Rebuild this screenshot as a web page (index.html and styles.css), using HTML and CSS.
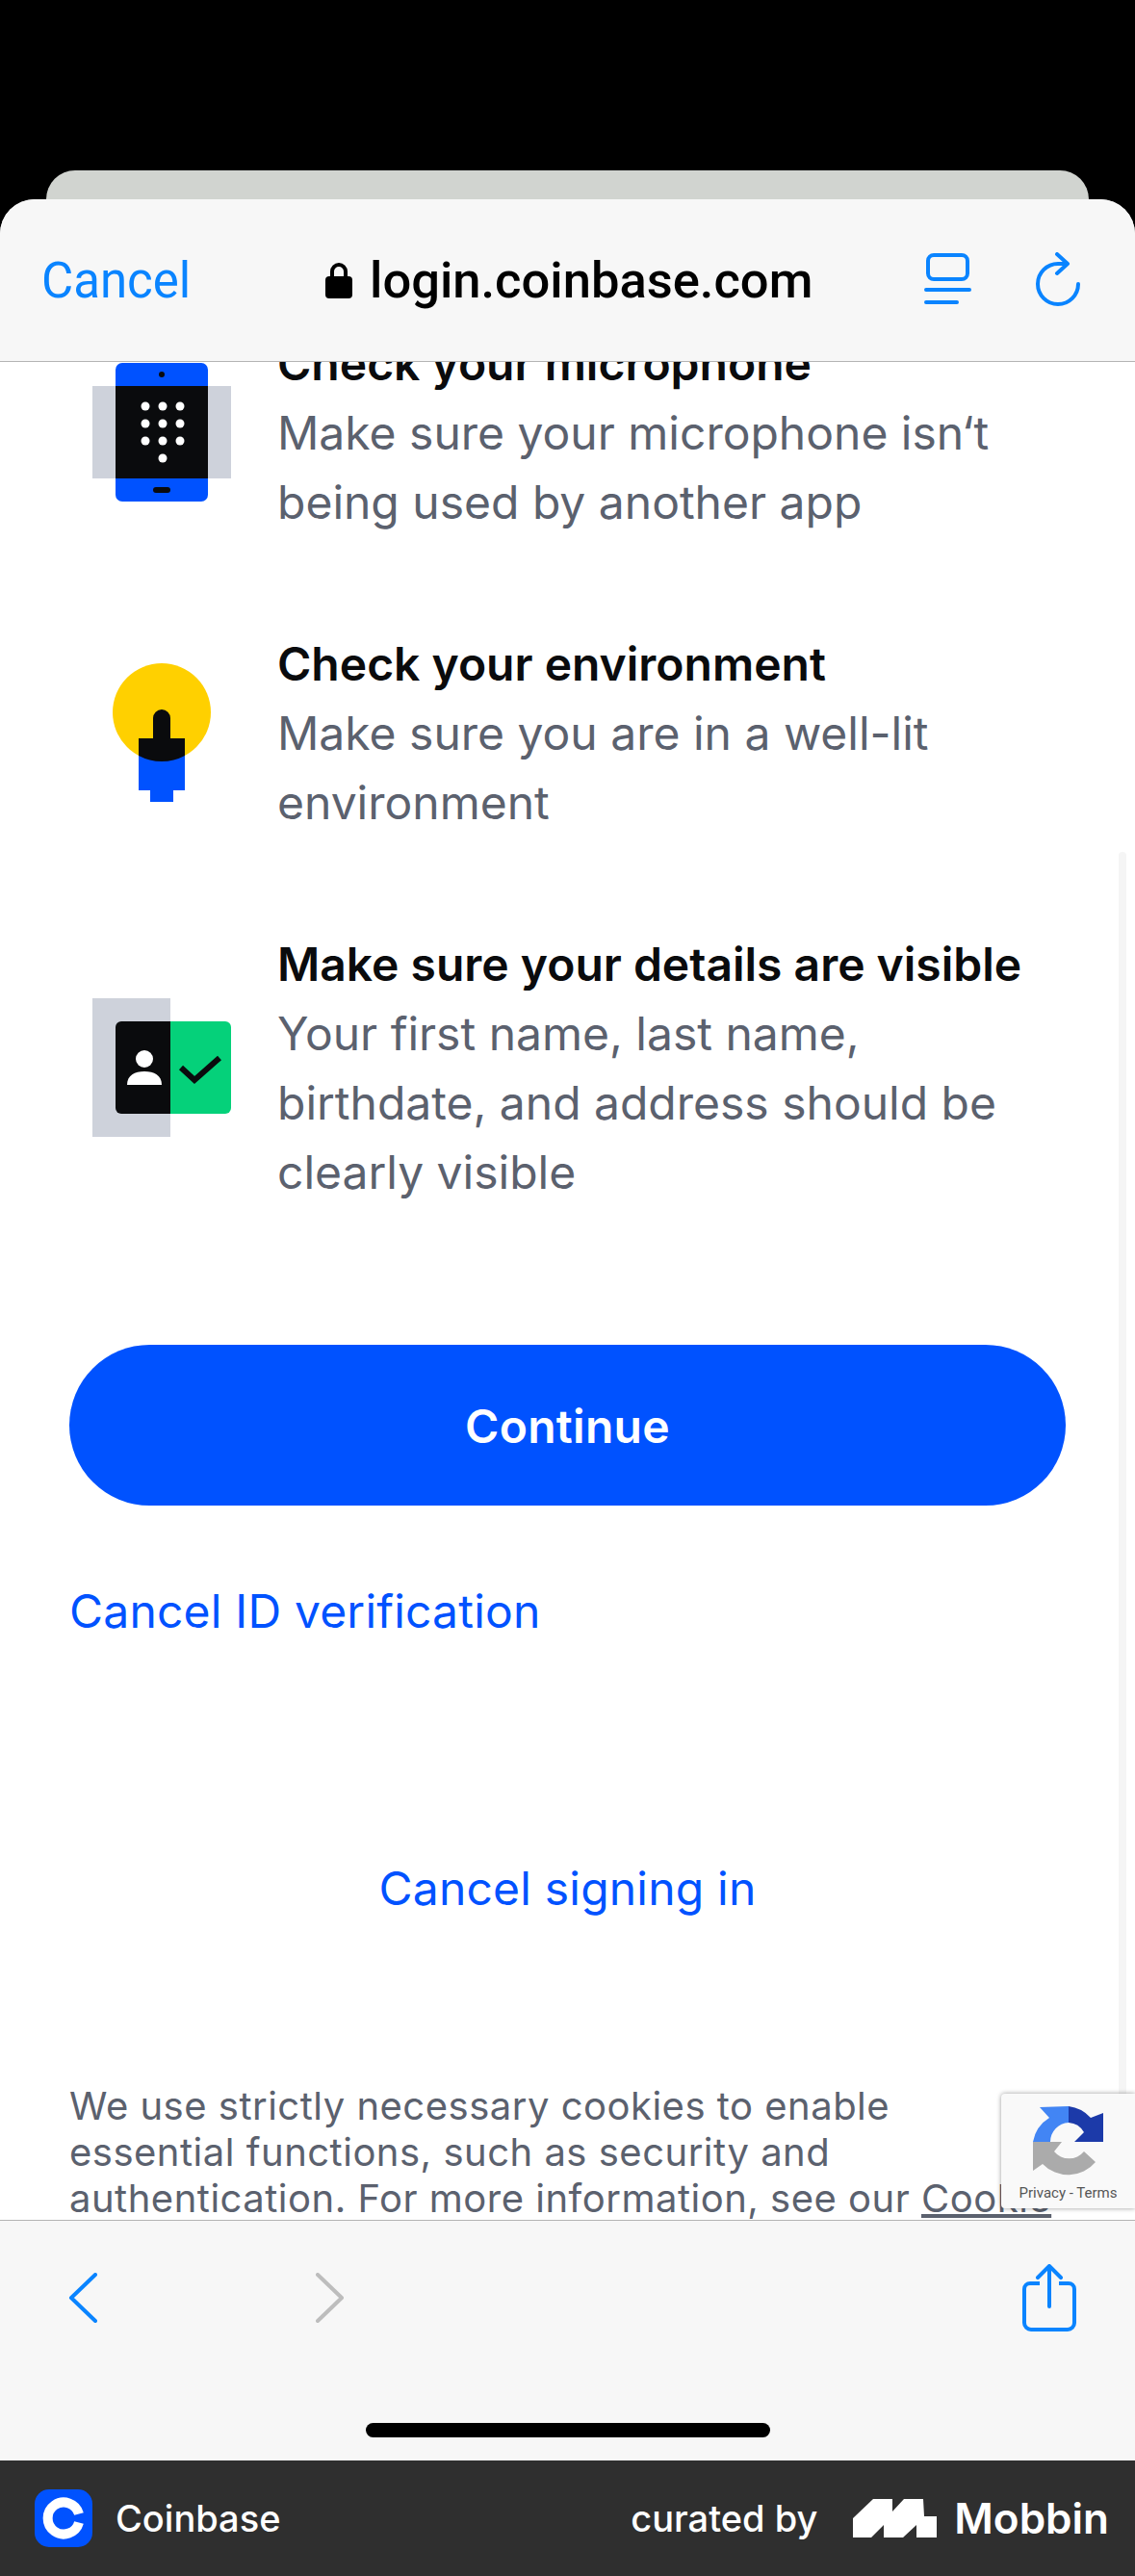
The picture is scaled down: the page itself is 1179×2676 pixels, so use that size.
FILE: index.html
```html
<!DOCTYPE html>
<html lang="en">
<head>
    <meta charset="UTF-8">
    <meta name="viewport" content="width=device-width, initial-scale=1.0">
    <title>Coinbase ID verification</title>
    <link rel="stylesheet" href="styles.css">
</head>
<body>
    <div class="back-card"></div>
    <div class="sheet">
        <header class="browser-bar">
            <span class="bar-cancel">Cancel</span>
            <div class="bar-url">
                <svg class="lock" width="28" height="38" viewBox="0 0 28 38">
                    <path d="M7 17V10a7 7 0 0 1 14 0v7" fill="none" stroke="#000" stroke-width="4"/>
                    <rect x="0" y="15" width="28" height="23" rx="4" fill="#000"/>
                </svg>
                <span>login.coinbase.com</span>
            </div>
            <svg class="bar-tabs" width="49" height="56" viewBox="0 0 49 56">
                <rect x="4" y="2" width="41" height="25" rx="6" fill="none" stroke="#0a84ff" stroke-width="4"/>
                <path d="M2 38H47M2 51H34" fill="none" stroke="#0a84ff" stroke-width="4" stroke-linecap="round"/>
            </svg>
            <svg class="bar-reload" width="50" height="58" viewBox="0 0 50 58">
                <path d="M46 33A21 21 0 1 1 25 12H34" fill="none" stroke="#0a84ff" stroke-width="4" stroke-linecap="round"/>
                <path d="M24 2L35 12L24 22" fill="none" stroke="#0a84ff" stroke-width="4" stroke-linecap="round" stroke-linejoin="round"/>
            </svg>
        </header>

        <main class="content">
            <div class="tip">
                <svg class="tip-icon" width="144" height="144" viewBox="0 0 144 144">
                    <rect x="24" y="0" width="96" height="144" rx="7" fill="#0052ff"/>
                    <rect x="0" y="24" width="144" height="96" fill="#ced2db"/>
                    <rect x="24" y="24" width="96" height="96" fill="#0a0b0d"/>
                    <circle cx="72" cy="12" r="3" fill="#0a0b0d"/>
                    <g fill="#fff">
                        <circle cx="55" cy="45" r="4.5"/><circle cx="73" cy="45" r="4.5"/><circle cx="91" cy="45" r="4.5"/>
                        <circle cx="55" cy="63" r="4.5"/><circle cx="73" cy="63" r="4.5"/><circle cx="91" cy="63" r="4.5"/>
                        <circle cx="55" cy="81" r="4.5"/><circle cx="73" cy="81" r="4.5"/><circle cx="91" cy="81" r="4.5"/>
                        <circle cx="73" cy="99" r="4.5"/>
                    </g>
                    <rect x="63" y="129" width="18" height="6" rx="3" fill="#0a0b0d"/>
                </svg>
                <div class="tip-text">
                    <h2>Check your microphone</h2>
                    <p>Make sure your microphone isn‘t being used by another app</p>
                </div>
            </div>

            <div class="tip">
                <svg class="tip-icon" width="144" height="144" viewBox="0 0 144 144">
                    <circle cx="72" cy="51" r="51" fill="#ffd000"/>
                    <path d="M48 90H96V132H84V144H60V132H48Z" fill="#0052ff"/>
                    <path d="M48 78H63V57a9 9 0 0 1 18 0V78H96V96A51 51 0 0 1 48 96Z" fill="#0a0b0d"/>
                </svg>
                <div class="tip-text">
                    <h2>Check your environment</h2>
                    <p>Make sure you are in a well-lit environment</p>
                </div>
            </div>

            <div class="tip">
                <svg class="tip-icon" width="144" height="144" viewBox="0 0 144 144">
                    <rect x="0" y="0" width="81" height="144" fill="#ced2db"/>
                    <path d="M81 24H138a6 6 0 0 1 6 6V114a6 6 0 0 1-6 6H81Z" fill="#05d17a"/>
                    <path d="M81 24H30a6 6 0 0 0-6 6V114a6 6 0 0 0 6 6H81Z" fill="#0a0b0d"/>
                    <circle cx="54" cy="63" r="9" fill="#fff"/>
                    <path d="M36 90C36 80 44 76 54 76S72 80 72 90Z" fill="#fff"/>
                    <path d="M92 72L106 85L132 62" fill="none" stroke="#0a0b0d" stroke-width="6"/>
                </svg>
                <div class="tip-text">
                    <h2>Make sure your details are visible</h2>
                    <p>Your first name, last name, birthdate, and address should be clearly visible</p>
                </div>
            </div>

            <button class="continue-btn">Continue</button>
            <a class="link cancel-id">Cancel ID verification</a>
            <a class="link cancel-signin">Cancel signing in</a>
            <p class="cookie-text">We use strictly necessary cookies to enable<br>essential functions, such as security and<br>authentication. For more information, see our <u>Cookie</u></p>

            <div class="scroll-thumb"></div>
            <div class="recaptcha">
                <svg width="74" height="75" viewBox="0 0 74 75">
                    <path d="M37 0A37 37 0 0 1 60 12L73 7V37H43L53 27A20 20 0 0 0 37 17Z" fill="#1c3aa9"/>
                    <path d="M37 0L7 1L17 12A37 37 0 0 0 0 37H18A20 20 0 0 1 37 17Z" fill="#4285f4"/>
                    <path d="M0 37H30L22 47A20 20 0 0 0 53 47L65 58A37 37 0 0 1 10 60L0 67Z" fill="#ababab"/>
                </svg>
                <span>Privacy - Terms</span>
            </div>
        </main>

        <footer class="browser-tools">
            <div class="tools-row">
                <svg class="tool-back" width="30" height="52" viewBox="0 0 30 52">
                    <path d="M28 2L3 26L28 50" fill="none" stroke="#0a84ff" stroke-width="4" stroke-linecap="round" stroke-linejoin="round"/>
                </svg>
                <svg class="tool-forward" width="30" height="52" viewBox="0 0 30 52">
                    <path d="M2 2L27 26L2 50" fill="none" stroke="#bdbdbd" stroke-width="4" stroke-linecap="round" stroke-linejoin="round"/>
                </svg>
                <svg class="tool-share" width="56" height="70" viewBox="0 0 56 70">
                    <path d="M18 20H8a6 6 0 0 0-6 6V61a7 7 0 0 0 7 7H47a7 7 0 0 0 7-7V26a6 6 0 0 0-6-6H38" fill="none" stroke="#0a84ff" stroke-width="4"/>
                    <path d="M28 44V2M16 14L28 2L40 14" fill="none" stroke="#0a84ff" stroke-width="4" stroke-linecap="round" stroke-linejoin="round"/>
                </svg>
            </div>
            <div class="home-bar"></div>
        </footer>
    </div>

    <div class="credit">
        <div class="credit-app">
            <svg width="60" height="60" viewBox="0 0 60 60">
                <rect width="60" height="60" rx="15" fill="#0052ff"/>
                <path d="M46 25.500A16.500 16.500 0 1 0 46 34.500" fill="none" stroke="#fff" stroke-width="10"/>
            </svg>
            <span>Coinbase</span>
        </div>
        <div class="credit-by">
            <span>curated by</span>
            <svg width="87" height="40" viewBox="0 0 87 40">
                <path d="M0 20L21 0H41V13L53 0H73L74 18H87V40H66V27L52 40H32V27L19 40H0Z" fill="#fff"/>
            </svg>
            <span class="mobbin">Mobbin</span>
        </div>
    </div>
</body>
</html>
```

FILE: styles.css
```css
* {
    box-sizing: border-box;
}
body {
    font-family: Inter, Arial, sans-serif;
    background: #000;
    margin: 0;
    width: 1179px;
    height: 2676px;
    padding-top: 177px;
    overflow: hidden;
    display: flex;
    flex-direction: column;
}
.back-card {
    height: 30px;
    margin: 0 48px;
    background: #d1d4d0;
    border-radius: 30px 30px 0 0;
    flex-shrink: 0;
}
.sheet {
    flex: 1;
    min-height: 0;
    display: flex;
    flex-direction: column;
    background: #fff;
    border-radius: 36px 36px 0 0;
    overflow: hidden;
}

/* top safari bar */
.browser-bar {
    height: 169px;
    flex-shrink: 0;
    display: flex;
    align-items: center;
    background: #f7f7f7;
    border-bottom: 1px solid #b4b4b4;
    padding: 0 55px 0 43px;
    position: relative;
    z-index: 2;
}
.bar-cancel {
    font-family: Roboto, Arial, sans-serif;
    font-size: 51px;
    color: #0a84ff;
    width: 295px;
}
.bar-url {
    display: flex;
    align-items: center;
    gap: 18px;
    font-family: Roboto, Arial, sans-serif;
    font-size: 52.5px;
    font-weight: 500;
    color: #000;
    flex: 1;
}
.bar-reload {
    margin-left: 65px;
}

/* page content */
.content {
    flex: 1;
    min-height: 0;
    overflow: hidden;
    position: relative;
    padding: 0 72px;
}
.tip {
    display: flex;
    align-items: center;
    gap: 48px;
    margin-left: 24px;
    margin-bottom: 96px;
}
.tip:first-child {
    margin-top: -35px;
}
.tip-icon {
    flex-shrink: 0;
}
.tip-text {
    padding-top: 1px;
    margin-bottom: -1px;
}
.tip-text h2 {
    margin: 0;
    font-size: 48px;
    line-height: 72px;
    font-weight: 600;
    color: #0a0b0d;
}
.tip-text p {
    margin: 0;
    font-size: 48px;
    line-height: 72px;
    color: #5b616e;
}
.continue-btn {
    display: block;
    width: 100%;
    height: 167px;
    margin-top: 144px;
    border: none;
    border-radius: 84px;
    background: #0052ff;
    color: #fff;
    font-family: inherit;
    font-size: 48px;
    font-weight: 600;
    letter-spacing: 0.3px;
    padding-top: 2px;
}
.link {
    display: block;
    font-size: 48px;
    line-height: 72px;
    letter-spacing: 0.2px;
    color: #0052ff;
}
.cancel-id {
    margin-top: 74px;
}
.cancel-signin {
    margin-top: 216px;
    text-align: center;
}
.cookie-text {
    margin: 166px 0 0;
    white-space: nowrap;
    font-size: 40px;
    line-height: 48px;
    letter-spacing: 0.5px;
    color: #5b616e;
}
.scroll-thumb {
    position: absolute;
    top: 509px;
    right: 9px;
    width: 8px;
    height: 1331px;
    border-radius: 4px;
    background: #f5f5f5;
}
.recaptcha {
    position: absolute;
    top: 1799px;
    right: 0;
    width: 139px;
    height: 119px;
    background: #f9f9f9;
    border-radius: 4px 0 0 4px;
    box-shadow: 0 0 5px rgba(0, 0, 0, 0.4);
    display: flex;
    flex-direction: column;
    align-items: center;
    padding-top: 13px;
    gap: 6px;
}
.recaptcha span {
    font-family: Roboto, Arial, sans-serif;
    font-size: 15px;
    color: #555;
    white-space: nowrap;
}

/* bottom safari bar */
.browser-tools {
    height: 250px;
    flex-shrink: 0;
    background: #f7f7f7;
    border-top: 1px solid #b4b4b4;
    position: relative;
    z-index: 2;
}
.tools-row {
    display: flex;
    align-items: center;
    height: 70px;
    margin-top: 45px;
}
.tool-back {
    margin-left: 71px;
}
.tool-forward {
    margin-left: 227px;
}
.tool-share {
    margin-left: auto;
    margin-right: 61px;
}
.home-bar {
    width: 420px;
    height: 15px;
    margin: 95px auto 0;
    border-radius: 8px;
    background: #000;
}

/* mobbin strip */
.credit {
    height: 120px;
    flex-shrink: 0;
    background: #2f2f2f;
    color: #fff;
    display: flex;
    align-items: center;
    justify-content: space-between;
    padding: 0 27px 0 36px;
    font-size: 38px;
    font-weight: 500;
}
.credit-app {
    display: flex;
    align-items: center;
    gap: 24px;
}
.credit-by {
    display: flex;
    align-items: center;
    gap: 37px;
}
.mobbin {
    font-size: 44px;
    font-weight: 600;
    margin-left: -19px;
}
```
